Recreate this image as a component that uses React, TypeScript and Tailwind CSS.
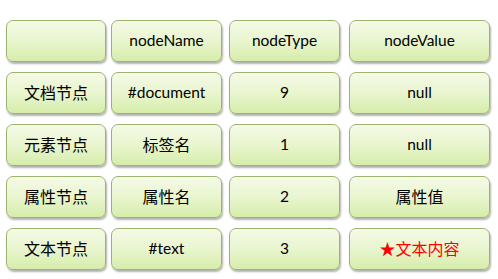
import React from "react";

const rows: string[][] = [
    ["", "nodeName", "nodeType", "nodeValue"],
    ["文档节点", "#document", "9", "null"],
    ["元素节点", "标签名", "1", "null"],
    ["属性节点", "属性名", "2", "属性值"],
    ["文本节点", "#text", "3", "★文本内容"],
];

const colClass = [
    "w-[100px]",
    "w-[111px] ml-[5px]",
    "w-[111px] ml-[7px]",
    "w-[141px] ml-[9px]",
];

function Cell({ text, col, red }: { text: string; col: number; red?: boolean }) {
    const cjk = /[\u4e00-\u9fff]/.test(text);
    return (
        <div
            className={`${colClass[col]} h-[42px] flex items-center justify-center rounded-[7px] border border-[#9db46c] bg-gradient-to-b from-[#f4fae6] via-[#e9f5cf] to-[#d6edaa] shadow-[1px_2px_2px_rgba(0,0,0,0.3)] ${
                cjk ? "text-[16px]" : "text-[15.5px]"
            } ${red ? "text-[#ff0000]" : "text-black"}`}
        >
            {text}
        </div>
    );
}

export default function App() {
    return (
        <div
            className="w-[498px] h-[279px] bg-white pt-[20px] pl-[6px] flex flex-col gap-[10px]"
            style={{ fontFamily: 'Lato, "Noto Sans CJK SC", sans-serif' }}
        >
            {rows.map((row, i) => (
                <div key={i} className="flex">
                    {row.map((cell, j) => (
                        <Cell key={j} text={cell} col={j} red={i === 4 && j === 3} />
                    ))}
                </div>
            ))}
        </div>
    );
}
